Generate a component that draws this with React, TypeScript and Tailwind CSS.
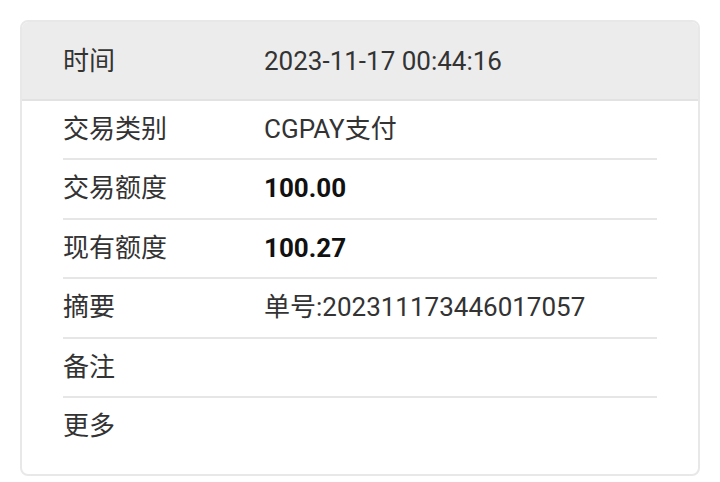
import React from "react";

type Row = { label: string; value: string; bold?: boolean };

const rows: Row[] = [
  { label: "交易类别", value: "CGPAY支付" },
  { label: "交易额度", value: "100.00", bold: true },
  { label: "现有额度", value: "100.27", bold: true },
  { label: "摘要", value: "单号:202311173446017057" },
  { label: "备注", value: "" },
  { label: "更多", value: "" },
];

const App = () => {
  return (
    <div
      className="w-[720px] h-[482px] bg-white p-5 text-[#333] text-[26px]"
      style={{ fontFamily: 'Roboto, "Noto Sans CJK SC", sans-serif' }}
    >
      <div className="rounded-lg border-2 border-[#e8e8e8] overflow-hidden">
        <div className="h-[79px] flex items-center px-[41px] pt-[2px] bg-[#ececec] border-b-2 border-[#e2e2e2]">
          <span className="w-[201px]">时间</span>
          <span>2023-11-17 00:44:16</span>
        </div>
        <div className="px-[41px] pb-[18px]">
          {rows.map((item, i) => (
            <div
              key={item.label}
              className={
                i === 0
                  ? "h-[57px] flex items-center"
                  : "h-[59.5px] flex items-center border-t-2 border-[#e6e6e6]"
              }
            >
              <span className="w-[201px]">{item.label}</span>
              <span className={item.bold ? "font-bold text-[#111]" : ""}>
                {item.value}
              </span>
            </div>
          ))}
        </div>
      </div>
    </div>
  );
};

export default App;
